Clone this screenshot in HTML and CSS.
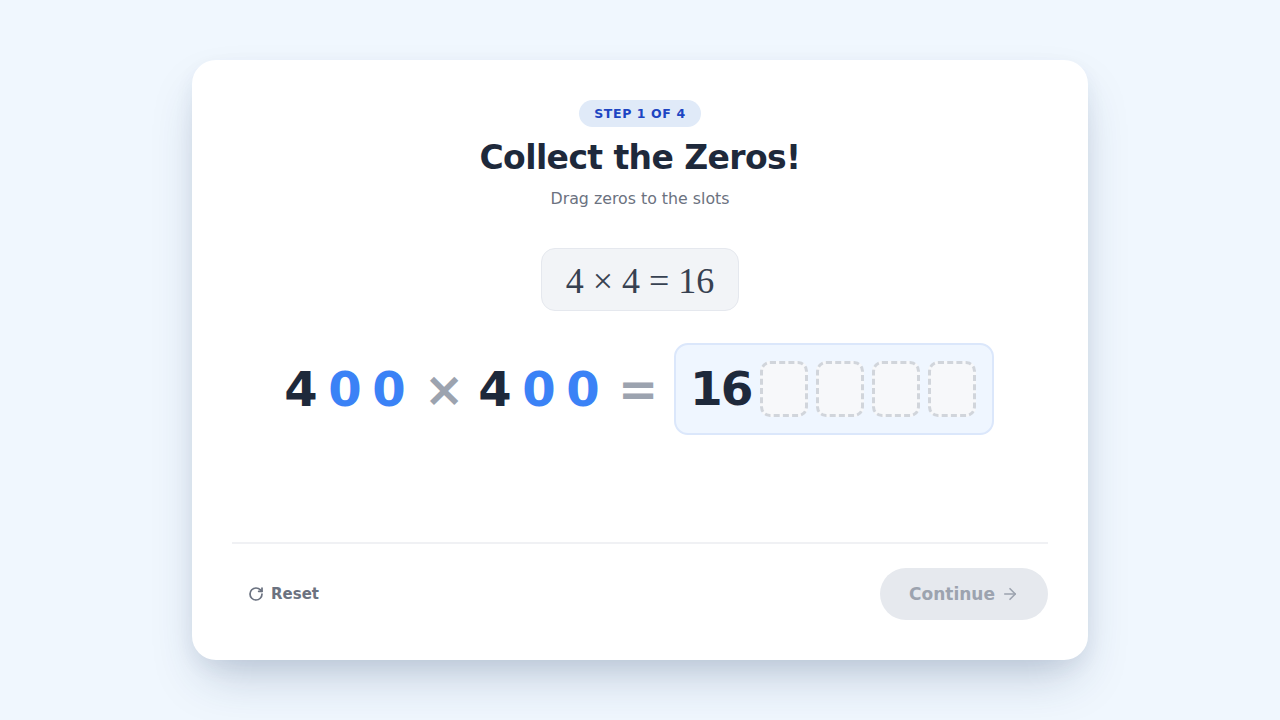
FILE: index.html
```html
<!DOCTYPE html>
<html lang="en">
<head>
<meta charset="utf-8">
<title>Collect the Zeros</title>
<link rel="stylesheet" href="styles.css">
</head>
<body>
<main class="stage">
  <section class="card">
    <div class="content">
      <span class="badge">STEP 1 OF 4</span>
      <h1 class="title">Collect the Zeros!</h1>
      <p class="subtitle">Drag zeros to the slots</p>
      <div class="hint"><span>4</span><span class="hint-op">×</span><span>4</span><span class="hint-op">=</span><span>16</span></div>
      <div class="equation">
        <span class="digit">4</span>
        <span class="digit zero">0</span>
        <span class="digit zero">0</span>
        <span class="op times">×</span>
        <span class="digit">4</span>
        <span class="digit zero">0</span>
        <span class="digit zero">0</span>
        <span class="op eq">=</span>
        <div class="answer">
          <span class="answer-num">16</span>
          <span class="slot"></span>
          <span class="slot"></span>
          <span class="slot"></span>
          <span class="slot"></span>
        </div>
      </div>
    </div>
    <footer class="footer">
      <button class="reset" type="button">
        <svg width="16" height="16" viewBox="0 0 24 24" fill="none" stroke="currentColor" stroke-width="2.6" stroke-linecap="round" stroke-linejoin="round"><path d="M21 12a9 9 0 1 1-9-9c2.52 0 4.93 1 6.74 2.740L21 8"/><path d="M21 3v5h-5"/></svg>
        <span>Reset</span>
      </button>
      <button class="continue" type="button" disabled>
        <span>Continue</span>
        <svg width="18" height="18" viewBox="0 0 24 24" fill="none" stroke="currentColor" stroke-width="2.2" stroke-linecap="round" stroke-linejoin="round"><path d="M5 12h14"/><path d="m12 5 7 7-7 7"/></svg>
      </button>
    </footer>
  </section>
</main>
</body>
</html>
```
FILE: styles.css
```css
* { box-sizing: border-box; }
html, body { margin: 0; padding: 0; }
body {
  background: #f0f7fe;
  font-family: "DejaVu Sans", Verdana, sans-serif;
  width: 1280px;
  height: 720px;
  overflow: hidden;
}
.stage {
  height: 720px;
  display: flex;
  justify-content: center;
  align-items: center;
}
.card {
  width: 896px;
  height: 600px;
  background: #ffffff;
  border-radius: 24px;
  box-shadow: 0 25px 50px -12px rgba(30, 58, 100, 0.25), 0 8px 20px rgba(30, 58, 100, 0.06);
  padding: 40px 40px 40px;
  display: flex;
  flex-direction: column;
}
.content {
  display: flex;
  flex-direction: column;
  align-items: center;
  flex: 1;
}
.badge {
  display: inline-block;
  background: #e0eaf8;
  color: #1d45c2;
  font-weight: bold;
  font-size: 12.5px;
  letter-spacing: 0.6px;
  padding: 0 15px;
  height: 27px;
  line-height: 27px;
  border-radius: 14px;
}
.title {
  margin: 9px 0 0;
  font-size: 33px;
  line-height: 44px;
  font-weight: bold;
  color: #1e293b;
  letter-spacing: -0.6px;
}
.subtitle {
  margin: 7px 0 0;
  font-size: 15.8px;
  line-height: 24px;
  color: #6b7280;
}
.hint {
  margin-top: 37px;
  width: 198px;
  height: 63px;
  background: #f2f4f7;
  border: 1px solid #e5e8ee;
  border-radius: 14px;
  display: flex;
  align-items: center;
  justify-content: center;
  font-family: "Liberation Serif", "DejaVu Serif", serif;
  font-size: 36px;
  color: #374151;
  padding-top: 2px;
}
.hint-op { margin: 0 9px; }
.equation {
  margin-top: 32px;
  display: flex;
  align-items: center;
  margin-left: -7px;
}
.digit {
  font-size: 48px;
  font-weight: bold;
  color: #1e293b;
  width: 44px;
  text-align: center;
  line-height: 56px;
}
.digit.zero { color: #3b82f6; }
.op {
  font-size: 48px;
  font-weight: bold;
  color: #9ca3af;
  text-align: center;
  line-height: 56px;
}
.op.times { width: 62px; padding-left: 4px; }
.op.eq { width: 66px; margin-right: 3px; }
.answer {
  width: 320px;
  height: 92px;
  background: #eff6ff;
  border: 2px solid #dbe7fb;
  border-radius: 14px;
  display: flex;
  align-items: center;
  padding: 0 14px 0 14px;
  gap: 8px;
}
.answer-num {
  font-size: 47px;
  font-weight: bold;
  color: #1e293b;
  line-height: 56px;
  letter-spacing: -2px;
  flex-shrink: 0;
  width: 62px;
}
.slot {
  flex-shrink: 0;
  width: 48px;
  height: 56px;
  border: 3px dashed #d1d5db;
  border-radius: 10px;
  background: #f7f8fa;
}
.footer {
  border-top: 2px solid #f0f1f4;
  padding-top: 24px;
  display: flex;
  justify-content: space-between;
  align-items: center;
}
.reset {
  background: none;
  border: none;
  display: flex;
  align-items: center;
  gap: 7px;
  padding: 0 16px;
  font-family: "DejaVu Sans", Verdana, sans-serif;
  font-weight: bold;
  font-size: 15px;
  color: #6b7280;
  height: 52px;
}
.continue {
  width: 168px;
  height: 52px;
  border-radius: 26px;
  border: none;
  background: #e6e9ee;
  color: #9ca3af;
  display: flex;
  align-items: center;
  justify-content: center;
  gap: 6px;
  font-family: "DejaVu Sans", Verdana, sans-serif;
  font-weight: bold;
  font-size: 17px;
}
```
